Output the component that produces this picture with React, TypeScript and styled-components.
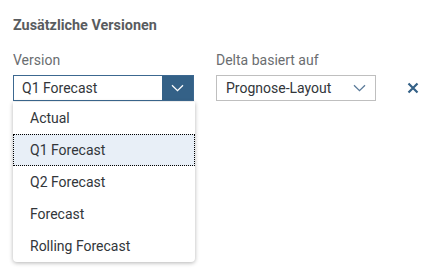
import React from 'react'
import styled, { createGlobalStyle } from 'styled-components'

const GlobalStyle = createGlobalStyle`
    html, body {
        margin: 0;
        padding: 0;
        background: #ffffff;
        font-family: Roboto, "Liberation Sans", Arial, sans-serif;
    }
`

const Page = styled.div`
    padding: 17px 13px 15px;
    width: 433px;
    height: 276px;
    box-sizing: border-box;
`

const Title = styled.div`
    font-size: 14.4px;
    font-weight: 700;
    line-height: 18px;
    color: #595c5f;
`

const Row = styled.div`
    display: flex;
    align-items: flex-end;
    margin-top: 16px;
`

const Field = styled.div<{ $width: number; $gap?: number }>`
    position: relative;
    flex-shrink: 0;
    display: flex;
    flex-direction: column;
    width: ${({ $width }) => $width}px;
    margin-left: ${({ $gap }) => $gap || 0}px;
`

const Label = styled.div`
    font-size: 14px;
    line-height: 18px;
    color: #6a6d70;
    margin-bottom: 6px;
`

const SelectBox = styled.div<{ $active?: boolean }>`
    display: flex;
    align-items: stretch;
    height: 26px;
    box-sizing: border-box;
    border: 1px solid ${({ $active }) => ($active ? '#3c6890' : '#bfbfbf')};
    background: #ffffff;
`

const SelectText = styled.div<{ $pad: number }>`
    flex: 1;
    display: flex;
    align-items: center;
    padding-left: ${({ $pad }) => $pad}px;
    font-size: 14px;
    color: #32363a;
`

const ArrowButton = styled.div<{ $active?: boolean }>`
    width: 31px;
    display: flex;
    align-items: center;
    justify-content: center;
    background: ${({ $active }) => ($active ? '#346187' : 'transparent')};
`

const CloseButton = styled.div`
    flex-shrink: 0;
    width: 24px;
    height: 26px;
    margin-left: 25px;
    display: flex;
    align-items: center;
    justify-content: center;
`

const Dropdown = styled.ul`
    position: absolute;
    left: 0;
    top: calc(100% + 1px);
    width: 182px;
    margin: 0;
    padding: 0;
    list-style: none;
    background: #ffffff;
    border-radius: 0 0 4px 4px;
    box-shadow: 0 1px 4px rgba(0, 0, 0, 0.3);
    z-index: 2;
`

const Item = styled.li<{ $selected?: boolean }>`
    height: 32px;
    box-sizing: border-box;
    display: flex;
    align-items: center;
    padding-left: 16px;
    font-size: 14px;
    color: #32363a;
    background: ${({ $selected }) => ($selected ? '#e8eff7' : 'transparent')};
    border: 1px dotted ${({ $selected }) => ($selected ? '#000000' : 'transparent')};
`

const Chevron = ({ color }: { color: string }) => (
    <svg width="13" height="8" viewBox="0 0 13 8">
        <path d="M1 1.2 L6.5 6.6 L12 1.2" fill="none" stroke={color} strokeWidth="1.3" />
    </svg>
)

const versions = ['Actual', 'Q1 Forecast', 'Q2 Forecast', 'Forecast', 'Rolling Forecast']

const App = () => {
    return (
        <Page>
            <GlobalStyle />
            <Title>Zusätzliche Versionen</Title>
            <Row>
                <Field $width={181}>
                    <Label>Version</Label>
                    <SelectBox $active>
                        <SelectText $pad={8}>Q1 Forecast</SelectText>
                        <ArrowButton $active>
                            <Chevron color="#ffffff" />
                        </ArrowButton>
                    </SelectBox>
                    <Dropdown>
                        {versions.map((v) => (
                            <Item key={v} $selected={v === 'Q1 Forecast'}>{v}</Item>
                        ))}
                    </Dropdown>
                </Field>
                <Field $width={160} $gap={22}>
                    <Label>Delta basiert auf</Label>
                    <SelectBox>
                        <SelectText $pad={9}>Prognose-Layout</SelectText>
                        <ArrowButton>
                            <Chevron color="#5a7a99" />
                        </ArrowButton>
                    </SelectBox>
                </Field>
                <CloseButton>
                    <svg width="12" height="12" viewBox="0 0 12 12">
                        <path d="M1.5 1.5 L10.5 10.5 M10.5 1.5 L1.5 10.5" stroke="#346187" strokeWidth="2.2" />
                    </svg>
                </CloseButton>
            </Row>
        </Page>
    )
}

export default App
